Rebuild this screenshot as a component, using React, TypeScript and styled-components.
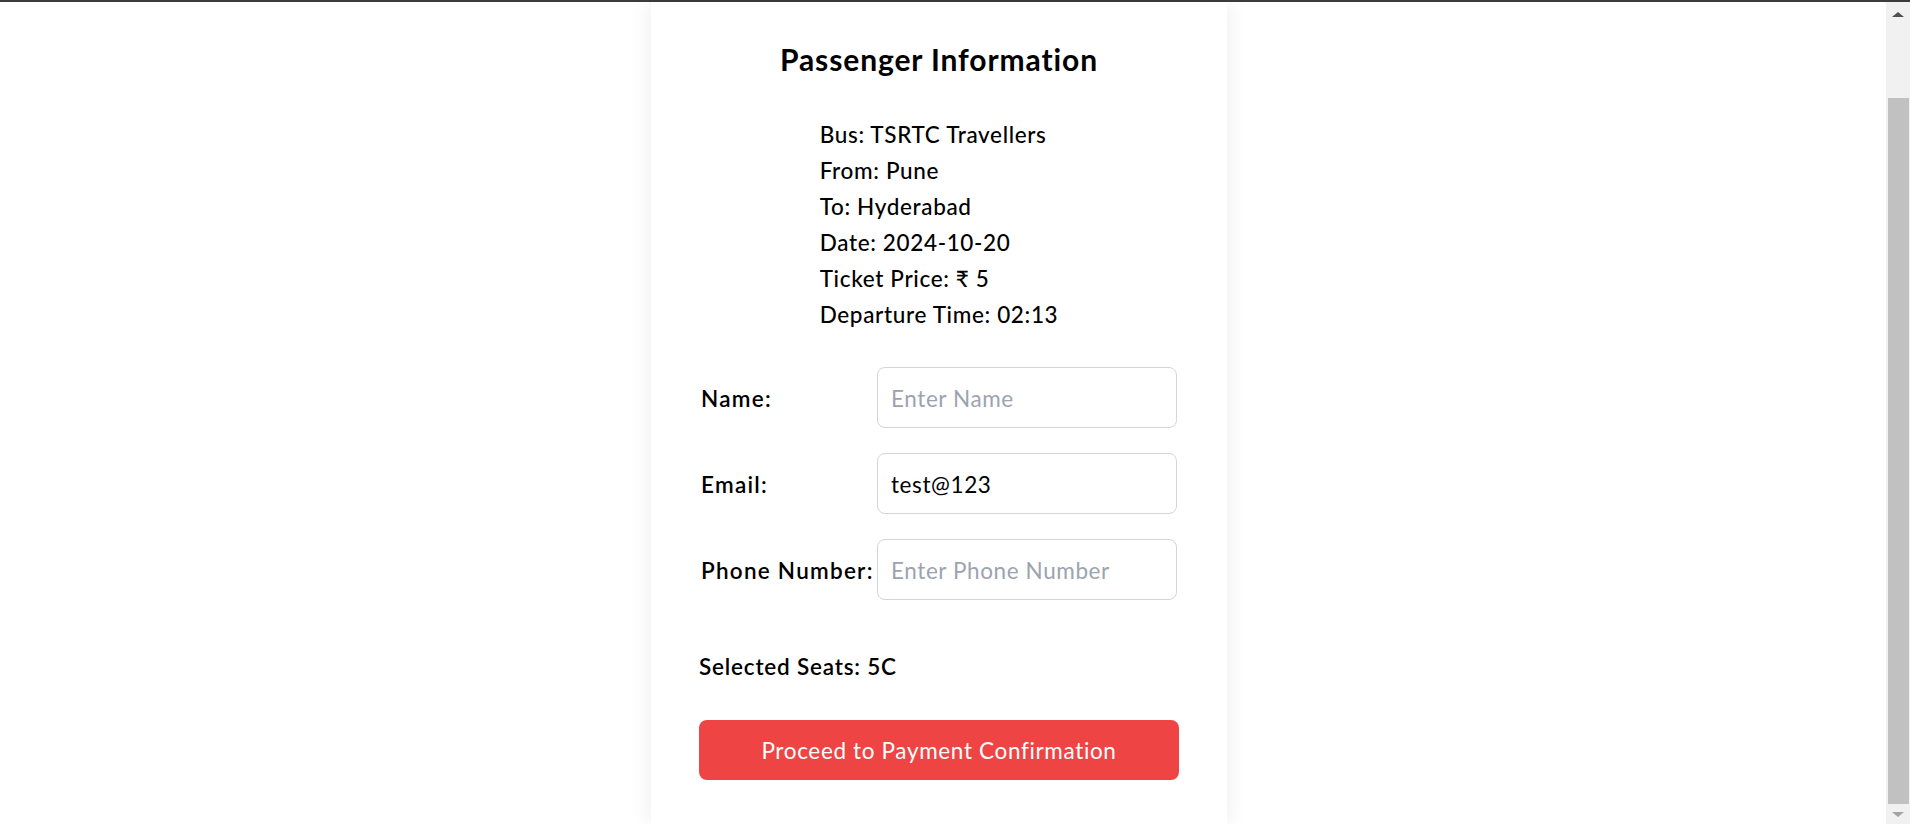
import React from 'react';
import styled, { createGlobalStyle } from 'styled-components';

const GlobalStyle = createGlobalStyle`
  html, body {
    margin: 0;
    height: 100%;
    overflow: hidden;
  }
  body {
    font-family: Lato, "Noto Sans", sans-serif;
    color: #000;
    background: #fff;
  }
  #root {
    height: 100%;
  }
`;

const Page = styled.div`
  display: flex;
  height: 100vh;
  box-sizing: border-box;
  border-top: 2px solid #3c3c3c;
`;

const Main = styled.main`
  flex: 1;
  display: flex;
  justify-content: center;
  padding-right: 8px;
`;

const Card = styled.section`
  width: 576px;
  box-sizing: border-box;
  padding: 37px 48px 0;
  background: #fff;
  box-shadow: 0 0 22px rgba(0, 0, 0, 0.08);
`;

const Title = styled.h2`
  margin: 0 0 38px;
  font-size: 30px;
  line-height: 40px;
  font-weight: 700;
  letter-spacing: 0.9px;
  text-align: center;
`;

const InfoWrap = styled.div`
  display: flex;
  justify-content: center;
`;

const InfoList = styled.div`
  font-size: 22.5px;
  line-height: 36px;
  font-weight: 500;
  letter-spacing: 0.65px;
`;

const Form = styled.form`
  display: flex;
  flex-direction: column;
  gap: 25px;
  margin-top: 34px;
`;

const FieldRow = styled.div`
  display: grid;
  grid-template-columns: 176px 1fr;
  align-items: center;
  padding: 0 2px;
`;

const Label = styled.label`
  padding-top: 2px;
  font-size: 22.5px;
  font-weight: 600;
  letter-spacing: 1.25px;
  white-space: nowrap;
`;

const Input = styled.input`
  box-sizing: border-box;
  width: 100%;
  height: 61px;
  padding: 2px 13px 0;
  border: 1px solid #d1d5db;
  border-radius: 8px;
  font-family: inherit;
  font-size: 22.5px;
  letter-spacing: 0.6px;
  color: #000;
  outline: none;

  &::placeholder {
    color: #9ca3af;
  }
`;

const Seats = styled.p`
  margin: 49px 0 0;
  font-size: 22.5px;
  line-height: 36px;
  font-weight: 600;
  letter-spacing: 0.8px;
`;

const SubmitButton = styled.button`
  display: block;
  width: 100%;
  height: 60px;
  margin-top: 35px;
  padding-top: 2px;
  border: none;
  border-radius: 8px;
  background: #ef4444;
  color: #fff;
  font-family: inherit;
  font-size: 22.5px;
  letter-spacing: 0.65px;
  cursor: pointer;
`;

const ScrollTrack = styled.div`
  width: 24px;
  flex: none;
  display: flex;
  flex-direction: column;
  background: #f1f1f1;
`;

const ScrollArrow = styled.div<{ $dir: 'up' | 'down' }>`
  height: ${(p) => (p.$dir === 'up' ? '24px' : '20px')};
  display: flex;
  align-items: center;
  justify-content: center;

  &::before {
    content: '';
    border-left: 6px solid transparent;
    border-right: 6px solid transparent;
    ${(p) =>
      p.$dir === 'up'
        ? 'border-bottom: 5px solid #505050;'
        : 'border-top: 5px solid #a3a3a3;'}
  }
`;

const ScrollGap = styled.div`
  height: 72px;
`;

const ScrollThumb = styled.div`
  flex: 1;
  margin: 0 1px 0 2px;
  background: #c1c1c1;
`;

const trip = {
  bus: 'TSRTC Travellers',
  from: 'Pune',
  to: 'Hyderabad',
  date: '2024-10-20',
  price: 5,
  departure: '02:13',
};

export default function App() {
  return (
    <>
      <GlobalStyle />
      <Page>
        <Main>
          <Card>
            <Title>Passenger Information</Title>
            <InfoWrap>
              <InfoList>
                <div>Bus: {trip.bus}</div>
                <div>From: {trip.from}</div>
                <div>To: {trip.to}</div>
                <div>Date: {trip.date}</div>
                <div>Ticket Price: ₹ {trip.price}</div>
                <div>Departure Time: {trip.departure}</div>
              </InfoList>
            </InfoWrap>
            <Form onSubmit={(e) => e.preventDefault()}>
              <FieldRow>
                <Label htmlFor="name">Name:</Label>
                <Input id="name" type="text" placeholder="Enter Name" />
              </FieldRow>
              <FieldRow>
                <Label htmlFor="email">Email:</Label>
                <Input id="email" type="text" defaultValue="test@123" />
              </FieldRow>
              <FieldRow>
                <Label htmlFor="phone">Phone Number:</Label>
                <Input id="phone" type="text" placeholder="Enter Phone Number" />
              </FieldRow>
            </Form>
            <Seats>Selected Seats: 5C</Seats>
            <SubmitButton type="button">Proceed to Payment Confirmation</SubmitButton>
          </Card>
        </Main>
        <ScrollTrack>
          <ScrollArrow $dir="up" />
          <ScrollGap />
          <ScrollThumb />
          <ScrollArrow $dir="down" />
        </ScrollTrack>
      </Page>
    </>
  );
}
